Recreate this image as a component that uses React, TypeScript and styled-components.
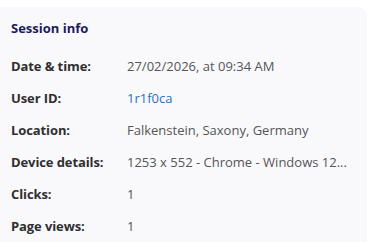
import React from "react";
import styled, { createGlobalStyle } from "styled-components";

const Global = createGlobalStyle`
  html, body { margin: 0; padding: 0; background: #ffffff; }
  body { font-family: "Open Sans", "Noto Sans", sans-serif; }
`;

const Page = styled.div`
  padding-top: 7px;
  width: 367px;
`;

const Card = styled.section`
  background: #f9f9fc;
  border-radius: 0 9px 0 0;
  padding: 12px 10px 14px 11px;
  height: 240px;
  box-sizing: border-box;
`;

const Title = styled.h2`
  margin: 0 0 20px;
  font-size: 13px;
  font-weight: 700;
  color: #1c1b5c;
  line-height: 18px;
`;

const List = styled.dl`
  margin: 0;
  display: grid;
  grid-template-columns: 116px minmax(0, 1fr);
  row-gap: 14px;
  font-size: 13px;
  line-height: 18px;
`;

const Label = styled.dt`
  font-weight: 700;
  color: #2f2f2f;
  letter-spacing: -0.1px;
`;

const Value = styled.dd<{ $link?: boolean }>`
  margin: 0;
  color: ${(p) => (p.$link ? "#2a6fc6" : "#555555")};
  white-space: nowrap;
  overflow: hidden;
  text-overflow: ellipsis;
`;

const rows: { label: string; value: string; link?: boolean }[] = [
  { label: "Date & time:", value: "27/02/2026, at 09:34 AM" },
  { label: "User ID:", value: "1r1f0ca", link: true },
  { label: "Location:", value: "Falkenstein, Saxony, Germany" },
  { label: "Device details:", value: "1253 x 552 - Chrome - Windows 12..." },
  { label: "Clicks:", value: "1" },
  { label: "Page views:", value: "1" },
];

export default function App() {
  return (
    <Page>
      <Global />
      <Card>
        <Title>Session info</Title>
        <List>
          {rows.map((r) => (
            <React.Fragment key={r.label}>
              <Label>{r.label}</Label>
              <Value $link={r.link}>{r.value}</Value>
            </React.Fragment>
          ))}
        </List>
      </Card>
    </Page>
  );
}
